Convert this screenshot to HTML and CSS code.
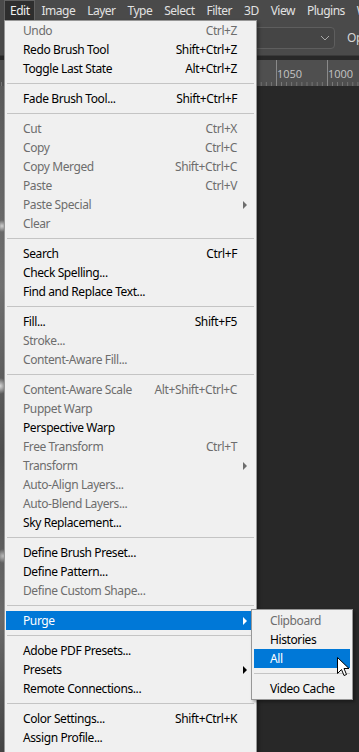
FILE: index.html
```html
<!DOCTYPE html>
<html lang="en">
<head>
    <meta charset="UTF-8">
    <meta name="viewport" content="width=device-width, initial-scale=1.0">
    <title>Edit menu</title>
    <link rel="stylesheet" href="styles.css">
</head>
<body>
    <div class="app">
        <div class="menubar">
            <span class="top-item open">Edit</span>
            <span class="top-item">Image</span>
            <span class="top-item">Layer</span>
            <span class="top-item">Type</span>
            <span class="top-item">Select</span>
            <span class="top-item">Filter</span>
            <span class="top-item">3D</span>
            <span class="top-item">View</span>
            <span class="top-item">Plugins</span>
            <span class="top-item">Window</span>
        </div>
        <div class="options">
            <div class="select">
                <svg width="10" height="6" viewBox="0 0 10 6"><path d="M1 1 L5 5 L9 1" fill="none" stroke="#a8a8a8" stroke-width="1"/></svg>
            </div>
            <span class="opt-label">Opacity:</span>
        </div>
        <div class="ruler">
            <span class="mark">1050</span>
            <span class="mark">1000</span>
        </div>
        <div class="canvas">
            <div class="doc"></div>
        </div>
    </div>

    <div class="menu edit-menu">
        <div class="item disabled"><span class="label">Undo</span><span class="key">Ctrl+Z</span></div>
        <div class="item"><span class="label">Redo Brush Tool</span><span class="key">Shift+Ctrl+Z</span></div>
        <div class="item"><span class="label">Toggle Last State</span><span class="key">Alt+Ctrl+Z</span></div>
        <div class="sep"></div>
        <div class="item"><span class="label">Fade Brush Tool...</span><span class="key">Shift+Ctrl+F</span></div>
        <div class="sep"></div>
        <div class="item disabled"><span class="label">Cut</span><span class="key">Ctrl+X</span></div>
        <div class="item disabled"><span class="label">Copy</span><span class="key">Ctrl+C</span></div>
        <div class="item disabled"><span class="label">Copy Merged</span><span class="key">Shift+Ctrl+C</span></div>
        <div class="item disabled"><span class="label">Paste</span><span class="key">Ctrl+V</span></div>
        <div class="item disabled sub"><span class="label">Paste Special</span></div>
        <div class="item disabled"><span class="label">Clear</span></div>
        <div class="sep"></div>
        <div class="item"><span class="label">Search</span><span class="key">Ctrl+F</span></div>
        <div class="item"><span class="label">Check Spelling...</span></div>
        <div class="item"><span class="label">Find and Replace Text...</span></div>
        <div class="sep"></div>
        <div class="item"><span class="label">Fill...</span><span class="key">Shift+F5</span></div>
        <div class="item disabled"><span class="label">Stroke...</span></div>
        <div class="item disabled"><span class="label">Content-Aware Fill...</span></div>
        <div class="sep"></div>
        <div class="item disabled"><span class="label">Content-Aware Scale</span><span class="key">Alt+Shift+Ctrl+C</span></div>
        <div class="item disabled"><span class="label">Puppet Warp</span></div>
        <div class="item"><span class="label">Perspective Warp</span></div>
        <div class="item disabled"><span class="label">Free Transform</span><span class="key">Ctrl+T</span></div>
        <div class="item disabled sub"><span class="label">Transform</span></div>
        <div class="item disabled"><span class="label">Auto-Align Layers...</span></div>
        <div class="item disabled"><span class="label">Auto-Blend Layers...</span></div>
        <div class="item"><span class="label">Sky Replacement...</span></div>
        <div class="sep"></div>
        <div class="item"><span class="label">Define Brush Preset...</span></div>
        <div class="item"><span class="label">Define Pattern...</span></div>
        <div class="item disabled"><span class="label">Define Custom Shape...</span></div>
        <div class="sep"></div>
        <div class="item active sub"><span class="label">Purge</span></div>
        <div class="sep"></div>
        <div class="item"><span class="label">Adobe PDF Presets...</span></div>
        <div class="item sub"><span class="label">Presets</span></div>
        <div class="item"><span class="label">Remote Connections...</span></div>
        <div class="sep"></div>
        <div class="item"><span class="label">Color Settings...</span><span class="key">Shift+Ctrl+K</span></div>
        <div class="item"><span class="label">Assign Profile...</span></div>
    </div>

    <div class="menu purge-menu">
        <div class="item disabled"><span class="label">Clipboard</span></div>
        <div class="item"><span class="label">Histories</span></div>
        <div class="item active"><span class="label">All</span></div>
        <div class="sep"></div>
        <div class="item"><span class="label">Video Cache</span></div>
    </div>

    <svg class="cursor" width="13" height="20" viewBox="0 0 13 20">
        <path d="M0.5 0.5 L0.5 16.5 L4.5 12.5 L7 18.5 L9.5 17.5 L7 11.5 L12 11.5 Z" fill="#fff" stroke="#000" stroke-width="1" stroke-linejoin="miter"/>
    </svg>
</body>
</html>
```

FILE: styles.css
```css
* {
    box-sizing: border-box;
}
body {
    margin: 0;
    width: 359px;
    height: 752px;
    overflow: hidden;
    background: #282828;
    font-family: "Noto Sans", "Open Sans", sans-serif;
    font-size: 12px;
    letter-spacing: -0.4px;
}
.app {
    display: flex;
    flex-direction: column;
    height: 752px;
}
.menubar {
    display: flex;
    height: 20px;
    padding-left: 4px;
    background: #4a4a4a;
    color: #e2e2e2;
    letter-spacing: -0.5px;
    white-space: nowrap;
    overflow: hidden;
}
.top-item {
    flex-shrink: 0;
    padding: 0 5px;
    line-height: 19px;
    border: 1px solid transparent;
    border-bottom: none;
}
.top-item.open {
    background: #2e2e2e;
    border-color: #606060;
    color: #f0f0f0;
}
.options {
    display: flex;
    align-items: center;
    height: 36px;
    padding-left: 251px;
    background: #4a4a4a;
    border-bottom: 1px solid #3a3a3a;
    color: #d6d6d6;
    white-space: nowrap;
    overflow: hidden;
}
.select {
    flex-shrink: 0;
    display: flex;
    align-items: center;
    justify-content: flex-end;
    width: 84px;
    height: 22px;
    padding-right: 4px;
    background: #454545;
    border: 1px solid #5e5e5e;
    border-radius: 4px;
}
.opt-label {
    flex-shrink: 0;
    margin-left: 12px;
}
.ruler {
    display: flex;
    align-items: flex-start;
    height: 26px;
    margin-top: 4px;
    padding-left: 275px;
    padding-top: 8px;
    background-color: #4f4f4f;
    background-image:
        linear-gradient(90deg, #8a8a8a 1px, transparent 1px),
        linear-gradient(90deg, #7a7a7a 1px, transparent 1px);
    background-size: 51px 100%, 5.1px 4px;
    background-position: 276px 0, 276px 100%;
    background-repeat: repeat-x, repeat-x;
    color: #c4c4c4;
    font-family: "Open Sans", sans-serif;
    font-size: 11px;
    line-height: 12px;
    letter-spacing: 0;
    overflow: hidden;
}
.mark {
    flex-shrink: 0;
    width: 51px;
    padding-left: 2px;
}
.canvas {
    flex: 1;
    display: flex;
    background: #282828;
}
.doc {
    width: 5px;
    background:
        radial-gradient(circle at 2px 140px, #cfcfcf 0, transparent 6px),
        radial-gradient(circle at 0 300px, #d8d8d8 0, transparent 8px),
        radial-gradient(circle at 3px 470px, #bbbbbb 0, transparent 7px),
        linear-gradient(180deg, #5a5a5a, #707070 30%, #4e4e4e 55%, #6a6a6a 80%, #444);
}

/* dropdown menus */
.menu {
    position: absolute;
    background: #f0f0f0;
    border: 1px solid #979797;
    color: #000;
    white-space: nowrap;
}
.edit-menu {
    left: 4px;
    top: 20px;
    width: 253px;
    padding-bottom: 6px;
    box-shadow: 2px 2px 3px rgba(0, 0, 0, 0.35);
}
.purge-menu {
    left: 251px;
    top: 609px;
    width: 102px;
    padding-top: 1px;
    padding-bottom: 1px;
    box-shadow: 2px 2px 3px rgba(0, 0, 0, 0.35);
}
.item {
    position: relative;
    display: flex;
    align-items: center;
    height: 19px;
    margin: 0 1px;
    padding: 0 18px 0 17px;
}
.purge-menu .item {
    margin: 0 2px;
    padding-left: 16px;
}
.label {
    flex: 1;
}
.key {
    text-align: right;
}
.item.disabled {
    color: #6d6d6d;
}
.item.active {
    background: #0078d7;
    color: #fff;
}
.item.sub::after {
    content: "";
    position: absolute;
    right: 8px;
    top: 6px;
    border-left: 4px solid #000;
    border-top: 4px solid transparent;
    border-bottom: 4px solid transparent;
}
.item.disabled.sub::after {
    border-left-color: #6d6d6d;
}
.item.active.sub::after {
    border-left-color: #fff;
}
.sep {
    height: 11px;
    margin: 0 2px;
    padding-top: 5px;
}
.sep::before {
    content: "";
    display: block;
    height: 1px;
    background: #c4c4c4;
}
.cursor {
    position: absolute;
    left: 337px;
    top: 657px;
}
```
